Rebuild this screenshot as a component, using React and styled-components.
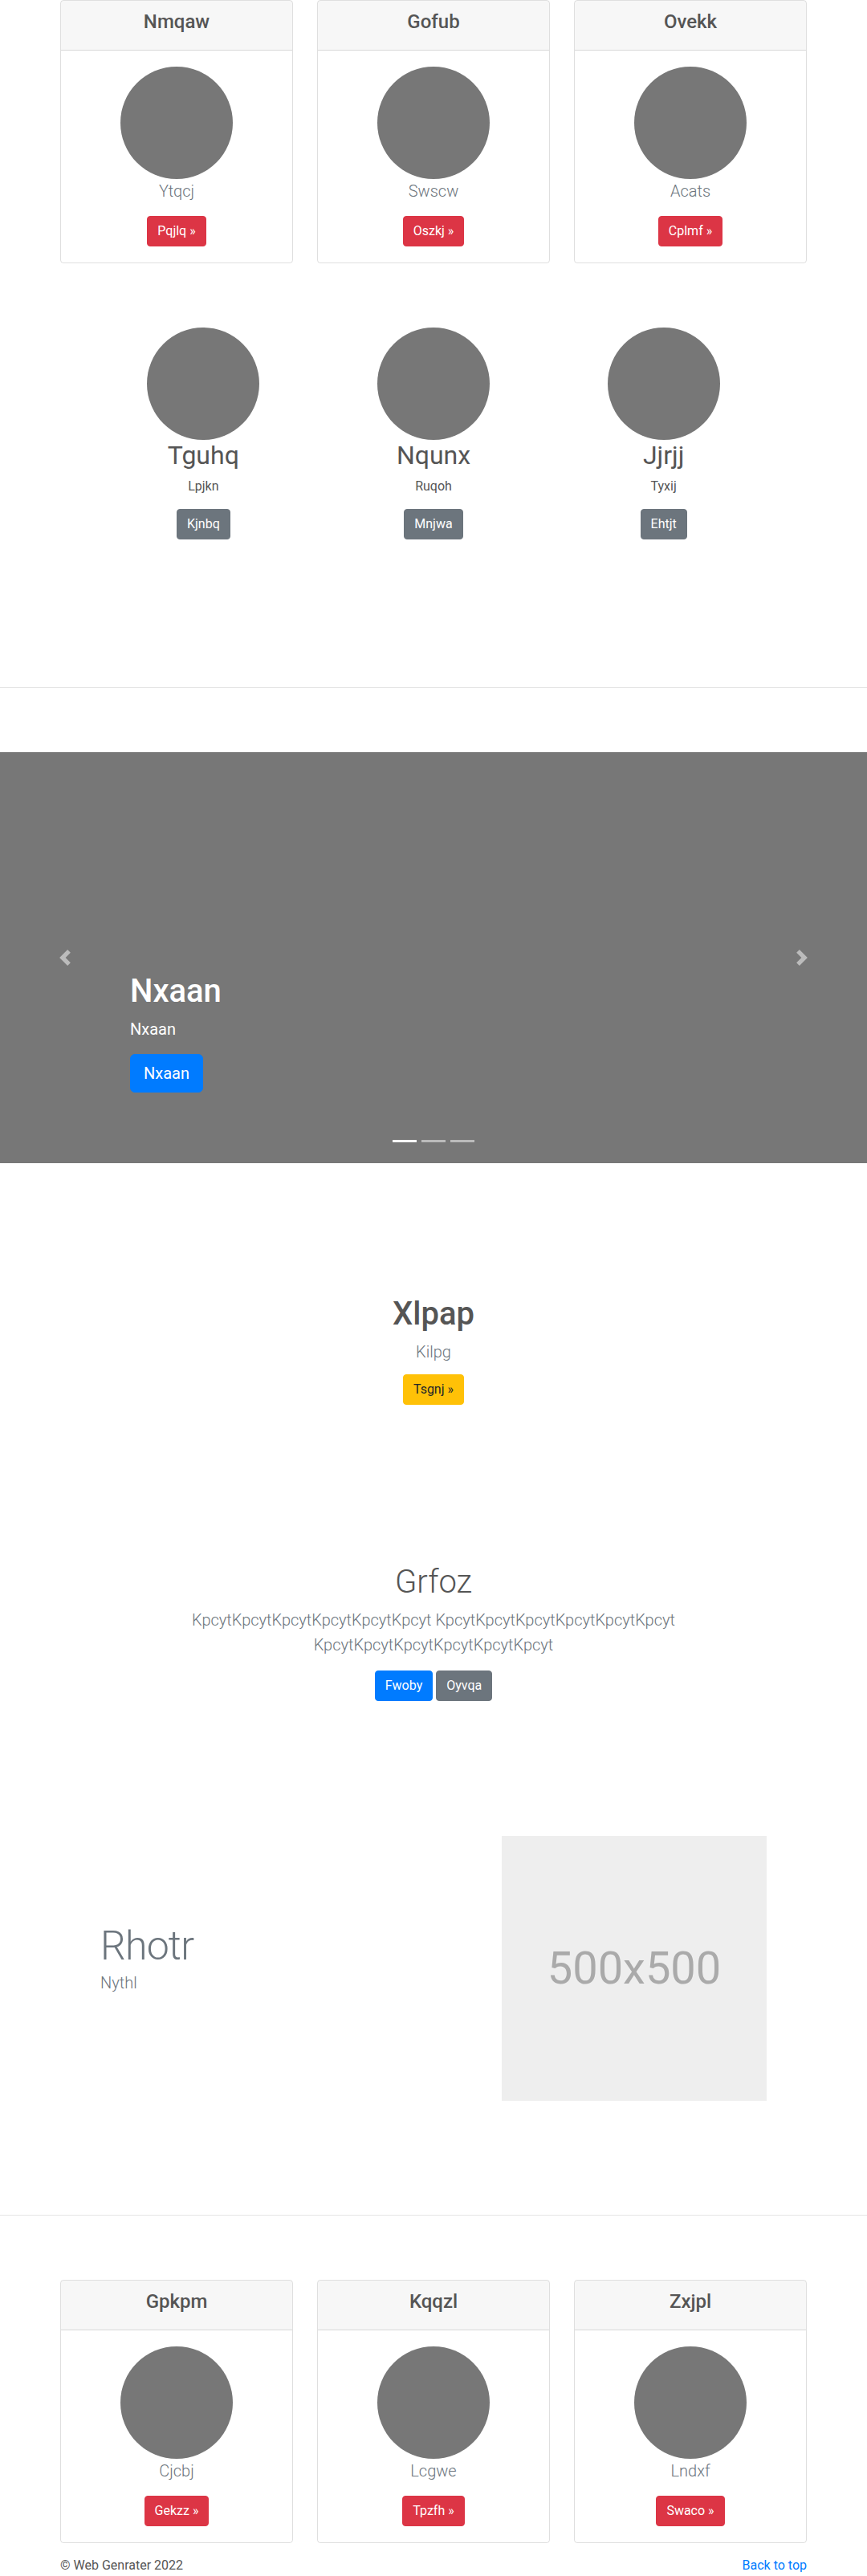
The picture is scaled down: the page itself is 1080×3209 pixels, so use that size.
import styled, { createGlobalStyle, css } from "styled-components";

const GlobalStyle = createGlobalStyle`
  body {
    margin: 0;
    font-family: "Segoe UI", Roboto, "Helvetica Neue", Arial, "Noto Sans", "Liberation Sans", sans-serif;
    font-size: 16px;
    line-height: 1.5;
    color: #555;
    background: #fff;
  }
  * { box-sizing: border-box; }
`;

const variants = {
  danger: css`background: #dc3545; border-color: #dc3545; color: #fff;`,
  secondary: css`background: #6c757d; border-color: #6c757d; color: #fff;`,
  primary: css`background: #007bff; border-color: #007bff; color: #fff;`,
  warning: css`background: #ffc107; border-color: #ffc107; color: #212529;`,
};

const Button = styled.a`
  display: inline-block;
  border: 1px solid transparent;
  border-radius: ${(p) => (p.$lg ? "6px" : "4px")};
  padding: ${(p) => (p.$lg ? "8px 16px" : "6px 12px")};
  font-size: ${(p) => (p.$lg ? "20px" : "16px")};
  line-height: 1.5;
  text-decoration: none;
  cursor: pointer;
  ${(p) => variants[p.$variant]}
`;

const Container = styled.div`
  max-width: 960px;
  margin: 0 auto;
  padding: 0 15px;
`;

const CardDeck = styled.div`
  display: grid;
  grid-template-columns: repeat(3, 1fr);
  gap: 30px;
`;

const Card = styled.div`
  border: 1px solid rgba(0, 0, 0, 0.125);
  border-radius: 4px;
  text-align: center;
  overflow: hidden;
`;

const CardHeader = styled.div`
  background: rgba(0, 0, 0, 0.03);
  border-bottom: 1px solid rgba(0, 0, 0, 0.125);
  padding: 12px 20px;
`;

const CardTitle = styled.h4`
  margin: 0 0 8px;
  font-size: 24px;
  font-weight: 500;
  line-height: 1.2;
  color: #555;
`;

const CardBody = styled.div`
  padding: 20px;
`;

const Avatar = styled.div`
  width: 140px;
  height: 140px;
  border-radius: 50%;
  background: #777;
  margin: 0 auto;
`;

const Lead = styled.p`
  margin: 0 0 ${(p) => p.$mb ?? 16}px;
  font-size: 20px;
  font-weight: 300;
  line-height: ${(p) => p.$lh ?? 1.5};
  color: #6c757d;
`;

const Marketing = styled.div`
  width: 860px;
  margin: 80px auto 0;
  display: grid;
  grid-template-columns: repeat(3, 1fr);
  text-align: center;
`;

const MarketingTitle = styled.h2`
  margin: 0 0 8px;
  font-size: 32px;
  font-weight: 400;
  line-height: 1.2;
  color: #555;
`;

const Text = styled.p`
  margin: 0 0 16px;
`;

const ButtonLine = styled.p`
  margin: 0;
`;

const Divider = styled.hr`
  margin: ${(p) => p.$top}px 0 80px;
  border: 0;
  border-top: 1px solid rgba(0, 0, 0, 0.1);
`;

const Carousel = styled.div`
  position: relative;
  height: 512px;
  background: #777;
`;

const Slide = styled.div`
  height: 100%;
  display: flex;
  flex-direction: column;
  justify-content: flex-end;
  align-items: flex-start;
  padding: 0 15% 88px;
  color: #fff;
`;

const SlideTitle = styled.h1`
  margin: 0 0 8px;
  font-size: 40px;
  font-weight: 500;
  line-height: 1.2;
`;

const SlideText = styled.p`
  margin: 0 0 16px;
  font-size: 20px;
  line-height: 1.5;
`;

const Control = styled.a`
  position: absolute;
  top: 0;
  bottom: 0;
  ${(p) => (p.$side === "prev" ? "left: 0;" : "right: 0;")}
  width: 15%;
  display: flex;
  align-items: center;
  justify-content: center;
  opacity: 0.5;
  svg { width: 20px; height: 20px; }
`;

const Indicators = styled.ol`
  position: absolute;
  left: 0;
  right: 0;
  bottom: 26px;
  margin: 0;
  padding: 0;
  list-style: none;
  display: flex;
  justify-content: center;
  gap: 6px;
`;

const Indicator = styled.li`
  width: 30px;
  height: 3px;
  background: #fff;
  opacity: ${(p) => (p.$active ? 1 : 0.5)};
`;

const Hero = styled.section`
  padding-top: 164px;
  text-align: center;
`;

const HeroTitle = styled.h1`
  margin: 0 0 8px;
  font-size: 40px;
  font-weight: ${(p) => p.$weight ?? 500};
  line-height: 1.2;
  color: #555;
`;

const Jumbo = styled.section`
  max-width: 640px;
  margin: 197px auto 0;
  padding: 0 15px;
  text-align: center;
`;

const ButtonRow = styled.div`
  display: flex;
  justify-content: center;
  gap: 4px;
`;

const Featurette = styled.section`
  width: 830px;
  margin: 168px auto 0;
  display: grid;
  grid-template-columns: 1fr 330px;
  align-items: center;
`;

const FeaturetteText = styled.div`
  padding-bottom: 20px;
`;

const FeaturetteHeading = styled.h2`
  margin: 0 0 6px;
  font-size: 50px;
  font-weight: 300;
  line-height: 1;
  letter-spacing: -0.8px;
  color: #6c757d;
`;

const Placeholder = styled.div`
  width: 330px;
  height: 330px;
  background: #eee;
  color: #aaa;
  font-size: 56px;
  display: flex;
  align-items: center;
  justify-content: center;
`;

const Footer = styled.footer`
  display: flex;
  justify-content: space-between;
  margin-top: 16px;
  p { margin: 0; }
  a { color: #007bff; text-decoration: none; }
`;

const PrevIcon = () => (
  <svg viewBox="0 0 8 8" fill="#fff">
    <path d="M5.25 0l-4 4 4 4 1.5-1.5L4.25 4l2.5-2.5L5.25 0z" />
  </svg>
);

const NextIcon = () => (
  <svg viewBox="0 0 8 8" fill="#fff">
    <path d="M2.75 0l-1.5 1.5L3.75 4l-2.5 2.5L2.75 8l4-4-4-4z" />
  </svg>
);

const topCards = [
  { title: "Nmqaw", text: "Ytqcj", cta: "Pqjlq" },
  { title: "Gofub", text: "Swscw", cta: "Oszkj" },
  { title: "Ovekk", text: "Acats", cta: "Cplmf" },
];

const bottomCards = [
  { title: "Gpkpm", text: "Cjcbj", cta: "Gekzz" },
  { title: "Kqqzl", text: "Lcgwe", cta: "Tpzfh" },
  { title: "Zxjpl", text: "Lndxf", cta: "Swaco" },
];

const marketing = [
  { title: "Tguhq", text: "Lpjkn", cta: "Kjnbq" },
  { title: "Nqunx", text: "Ruqoh", cta: "Mnjwa" },
  { title: "Jjrjj", text: "Tyxij", cta: "Ehtjt" },
];

function CardRow({ items }) {
  return (
    <Container>
      <CardDeck>
        {items.map((c) => (
          <Card key={c.title}>
            <CardHeader>
              <CardTitle>{c.title}</CardTitle>
            </CardHeader>
            <CardBody>
              <Avatar />
              <Lead>{c.text}</Lead>
              <Button $variant="danger">{c.cta} »</Button>
            </CardBody>
          </Card>
        ))}
      </CardDeck>
    </Container>
  );
}

export default function App() {
  return (
    <>
      <GlobalStyle />
      <CardRow items={topCards} />

      <Marketing>
        {marketing.map((m) => (
          <div key={m.title}>
            <Avatar />
            <MarketingTitle>{m.title}</MarketingTitle>
            <Text>{m.text}</Text>
            <ButtonLine>
              <Button $variant="secondary">{m.cta}</Button>
            </ButtonLine>
          </div>
        ))}
      </Marketing>

      <Divider $top={184} />

      <Carousel>
        <Slide>
          <SlideTitle>Nxaan</SlideTitle>
          <SlideText>Nxaan</SlideText>
          <Button $variant="primary" $lg>Nxaan</Button>
        </Slide>
        <Control $side="prev"><PrevIcon /></Control>
        <Control $side="next"><NextIcon /></Control>
        <Indicators>
          <Indicator $active />
          <Indicator />
          <Indicator />
        </Indicators>
      </Carousel>

      <Hero>
        <HeroTitle>Xlpap</HeroTitle>
        <Lead $mb={13}>Kilpg</Lead>
        <Button $variant="warning">Tsgnj »</Button>
      </Hero>

      <Jumbo>
        <HeroTitle $weight={300}>Grfoz</HeroTitle>
        <Lead $lh={1.55}>
          KpcytKpcytKpcytKpcytKpcytKpcyt KpcytKpcytKpcytKpcytKpcytKpcyt KpcytKpcytKpcytKpcytKpcytKpcyt
        </Lead>
        <ButtonRow>
          <Button $variant="primary">Fwoby</Button>
          <Button $variant="secondary">Oyvqa</Button>
        </ButtonRow>
      </Jumbo>

      <Featurette>
        <FeaturetteText>
          <FeaturetteHeading>Rhotr</FeaturetteHeading>
          <Lead $mb={0}>Nythl</Lead>
        </FeaturetteText>
        <Placeholder>500x500</Placeholder>
      </Featurette>

      <Divider $top={142} />

      <CardRow items={bottomCards} />

      <Container>
        <Footer>
          <p>© Web Genrater 2022</p>
          <p><a href="#">Back to top</a></p>
        </Footer>
      </Container>
    </>
  );
}
